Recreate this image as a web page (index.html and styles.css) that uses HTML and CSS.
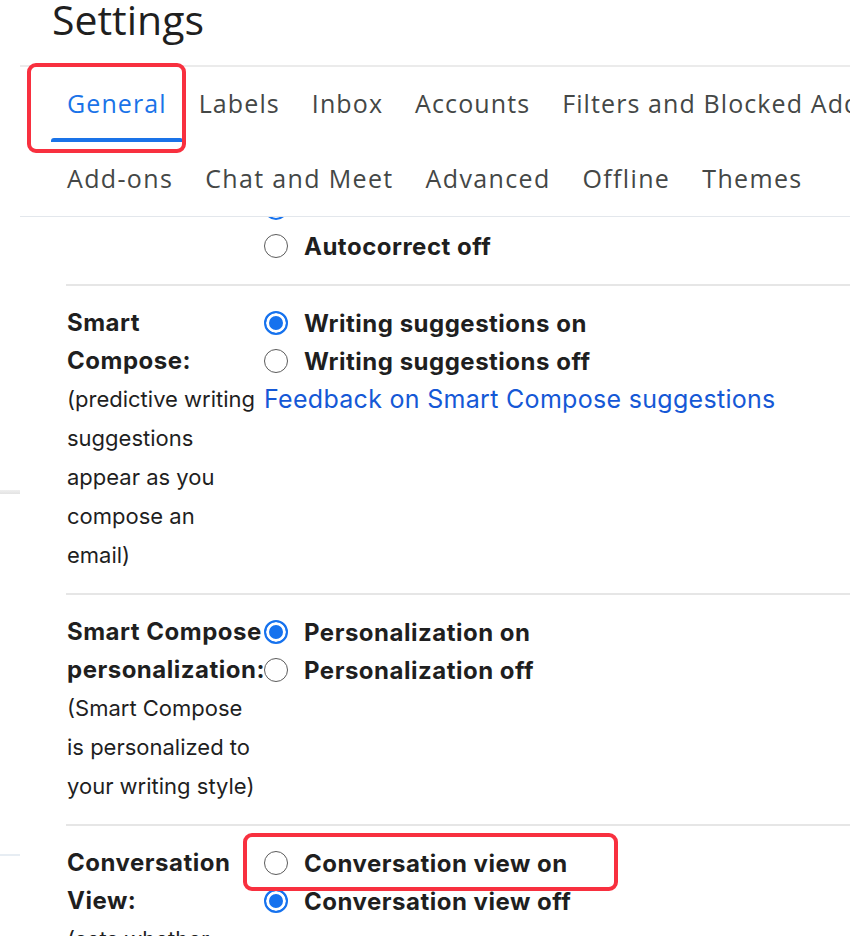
FILE: index.html
```html
<!DOCTYPE html>
<html lang="en">
<head>
<meta charset="utf-8">
<title>Settings</title>
<link rel="stylesheet" href="styles.css">
</head>
<body>
<div class="page">
  <aside class="gutter">
    <div class="gutter-mark-a"></div>
    <div class="gutter-mark-b"></div>
  </aside>
  <main class="panel">
    <h1 class="title">Settings</h1>
    <nav class="tabs">
      <div class="tab-row tab-row-1">
        <span class="tab active">General</span>
        <span class="tab">Labels</span>
        <span class="tab">Inbox</span>
        <span class="tab">Accounts</span>
        <span class="tab">Filters and Blocked Addresses</span>
        <span class="tab">Forwarding and POP/IMAP</span>
      </div>
      <div class="tab-row tab-row-2">
        <span class="tab">Add-ons</span>
        <span class="tab">Chat and Meet</span>
        <span class="tab">Advanced</span>
        <span class="tab">Offline</span>
        <span class="tab">Themes</span>
      </div>
    </nav>
    <div class="scroller">
      <div class="scroll-content">
        <section class="row row-first">
          <div class="label"></div>
          <div class="value">
            <div class="option"><span class="radio on"></span><span class="option-text">Autocorrect on</span></div>
            <div class="option"><span class="radio"></span><span class="option-text">Autocorrect off</span></div>
          </div>
        </section>
        <section class="row">
          <div class="label">
            <div class="label-title">Smart Compose:</div>
            <div class="label-desc">(predictive writing suggestions appear as you compose an email)</div>
          </div>
          <div class="value">
            <div class="option"><span class="radio on"></span><span class="option-text">Writing suggestions on</span></div>
            <div class="option"><span class="radio"></span><span class="option-text">Writing suggestions off</span></div>
            <a class="link">Feedback on Smart Compose suggestions</a>
          </div>
        </section>
        <section class="row">
          <div class="label">
            <div class="label-title">Smart Compose personalization:</div>
            <div class="label-desc">(Smart Compose is personalized to your writing style)</div>
          </div>
          <div class="value">
            <div class="option"><span class="radio on"></span><span class="option-text">Personalization on</span></div>
            <div class="option"><span class="radio"></span><span class="option-text">Personalization off</span></div>
          </div>
        </section>
        <section class="row">
          <div class="label">
            <div class="label-title">Conversation View:</div>
            <div class="label-desc">(sets whether emails of the same topic are grouped together)</div>
          </div>
          <div class="value">
            <div class="option"><span class="radio"></span><span class="option-text">Conversation view on</span></div>
            <div class="option"><span class="radio on"></span><span class="option-text">Conversation view off</span></div>
          </div>
        </section>
      </div>
    </div>
  </main>
  <div class="callout callout-tab"></div>
  <div class="callout callout-option"></div>
</div>
</body>
</html>
```
FILE: styles.css
```css
* { box-sizing: border-box; }
html, body { margin: 0; padding: 0; background: #fff; }
body {
  width: 850px;
  height: 936px;
  overflow: hidden;
  font-family: Inter, "Noto Sans", sans-serif;
  color: #1f1f1f;
}
.page {
  position: relative;
  display: flex;
  width: 850px;
  height: 936px;
  overflow: hidden;
}
.gutter {
  flex: 0 0 20px;
  display: flex;
  flex-direction: column;
}
.gutter-mark-a {
  margin-top: 490px;
  height: 4px;
  background: linear-gradient(#efefef, #e3e3e3);
}
.gutter-mark-b {
  margin-top: 360px;
  height: 2px;
  background: #e7edf3;
}
.panel {
  flex: 1;
  min-width: 0;
  display: flex;
  flex-direction: column;
  overflow: hidden;
}
.title {
  margin: 0;
  padding: 0 0 27px 32px;
  font-family: "Open Sans", sans-serif;
  font-weight: 400;
  font-size: 41px;
  line-height: 38px;
  color: #1f1f1f;
}
.tabs {
  border-top: 2px solid #ebebeb;
  border-bottom: 1px solid #e3e7ec;
  padding-left: 31px;
}
.tab-row {
  display: flex;
  white-space: nowrap;
}
.tab {
  position: relative;
  flex: none;
  padding: 0 16px;
  font-family: "Open Sans", sans-serif;
  font-size: 25px;
  letter-spacing: 1.1px;
  color: #444746;
}
.tab-row-1 .tab { height: 75px; line-height: 72px; }
.tab-row-2 .tab { height: 74px; line-height: 73px; letter-spacing: 1.35px; }
.tab.active { color: #1a73e8; }
.tab.active::after {
  content: "";
  position: absolute;
  left: 0;
  right: 0;
  bottom: 0;
  height: 4px;
  background: #1a73e8;
  border-radius: 3px 3px 0 0;
}
.scroller {
  flex: 1;
  overflow: hidden;
}
.scroll-content {
  margin-top: -45px;
}
.row {
  display: grid;
  grid-template-columns: 198px 1fr;
  margin-left: 46px;
  padding: 18px 0 18px;
  border-top: 2px solid #e6e6e6;
}
.row-first { border-top: 0; padding-top: 17px; padding-bottom: 19px; }
.label { padding-left: 1px; min-width: 0; }
.label-title {
  font-weight: 700;
  font-size: 24px;
  line-height: 38px;
  letter-spacing: 0.5px;
  color: #1f1f1f;
}
.label-desc {
  padding-right: 3px;
  font-size: 22px;
  line-height: 39px;
  color: #1f1f1f;
}
.value {
  display: flex;
  flex-direction: column;
}
.option {
  display: flex;
  align-items: center;
  gap: 16px;
  height: 38px;
}
.radio {
  flex: none;
  width: 24px;
  height: 24px;
  border-radius: 50%;
  border: 1.5px solid #5b5b5b;
  background: #fff;
}
.radio.on {
  border: 2px solid #1672ee;
  background: #1672ee;
  box-shadow: inset 0 0 0 3px #fff;
}
.option-text {
  font-weight: 700;
  font-size: 24px;
  letter-spacing: 0.5px;
  white-space: nowrap;
  color: #1f1f1f;
}
.link {
  font-size: 25px;
  line-height: 38px;
  letter-spacing: 0.3px;
  color: #1558d6;
  white-space: nowrap;
}
.callout {
  position: absolute;
  border: 4px solid #f8303f;
  border-radius: 9px;
}
.callout-tab {
  left: 27px;
  top: 63px;
  width: 159px;
  height: 90px;
}
.callout-option {
  left: 243px;
  top: 833px;
  width: 375px;
  height: 58px;
}
```
